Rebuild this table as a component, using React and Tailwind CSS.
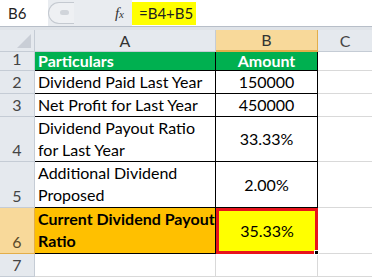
import React from "react";

const F = { fontFamily: "Lato, 'Liberation Sans', sans-serif" };

function RowHead({ n, h, sel }) {
  return (
    <div
      className={`w-[35px] shrink-0 flex items-end justify-center border-r border-b text-[16px] leading-[22px] ${
        sel ? "bg-[#f8d99a] border-[#e3ae4a] text-[#5a4a2a]" : "bg-[#e5e9ee] border-[#c5ccd5] text-[#444]"
      }`}
      style={{ height: h }}
    >
      {n}
    </div>
  );
}

export default function App() {
  return (
    <div className="w-[372px] h-[277px] overflow-hidden bg-white text-black" style={F}>
      {/* formula bar */}
      <div className="h-[27px] flex items-stretch bg-white border-b border-[#b7bec8]">
        <div className="w-[48px] shrink-0 flex items-center pl-[8px] text-[15px] text-[#222]">B6</div>
        <div className="w-[84px] shrink-0 flex items-center bg-[#e9ecf0] relative">
          <div className="absolute left-0 top-[2px] bottom-[2px] w-[26px] rounded-l-full border border-[#c4c9d0] border-r-0 bg-[#eef0f3]" />
          <div className="absolute left-[12px] top-[10px] w-[9px] h-[5px] rounded-full bg-[#d0d4da]" />
          <span className="ml-auto mr-[8px] italic font-serif text-[15px] text-[#333]" style={{ fontFamily: "'Liberation Serif', serif" }}>
            f<span className="text-[11px]">x</span>
          </span>
        </div>
        <div className="flex-1 flex items-center">
          <div className="h-[23px] w-[64px] bg-[#ffff00] flex items-center pl-[7px] text-[15px] text-[#222]">=B4+B5</div>
        </div>
      </div>
      <div className="h-[3px] bg-[#dfe3e8]" />
      {/* column header */}
      <div className="flex h-[22px]">
        <div className="w-[35px] shrink-0 bg-[#e5e9ee] border-r border-b border-[#c5ccd5] relative">
          <div
            className="absolute right-[3px] bottom-[3px] w-0 h-0"
            style={{ borderLeft: "14px solid transparent", borderBottom: "14px solid #c9ced6" }}
          />
        </div>
        <div className="w-[181px] shrink-0 bg-[#e5e9ee] border-r border-b border-[#c5ccd5] flex items-center justify-center text-[16px] text-[#333]">A</div>
        <div className="w-[102px] shrink-0 bg-[#f8d99a] border-r border-b-2 border-[#e3ae4a] flex items-center justify-center text-[16px] text-[#333]">B</div>
        <div className="flex-1 bg-[#e5e9ee] border-b border-[#c5ccd5] flex items-center justify-center text-[16px] text-[#444]">C</div>
      </div>
      {/* row 1 */}
      <div className="flex">
        <RowHead n="1" h={19} />
        <div className="w-[181px] h-[19px] shrink-0 bg-[#00b050] border-r border-b border-black text-white font-bold text-[16px] leading-[18px] pl-[3px]">Particulars</div>
        <div className="w-[102px] h-[19px] shrink-0 bg-[#00b050] border-r border-b border-black text-white font-bold text-[16px] leading-[18px] text-center">Amount</div>
        <div className="flex-1 h-[19px] border-b border-[#d9d9d9]" />
      </div>
      {/* row 2 */}
      <div className="flex">
        <RowHead n="2" h={23} />
        <div className="w-[181px] h-[23px] shrink-0 border-r border-b border-black text-[16px] leading-[22px] pl-[3px] whitespace-nowrap">Dividend Paid Last Year</div>
        <div className="w-[102px] h-[23px] shrink-0 border-r border-b border-black text-[16px] leading-[22px] text-center">150000</div>
        <div className="flex-1 h-[23px] border-b border-[#d9d9d9]" />
      </div>
      {/* row 3 */}
      <div className="flex">
        <RowHead n="3" h={23} />
        <div className="w-[181px] h-[23px] shrink-0 border-r border-b border-black text-[16px] leading-[22px] pl-[3px] whitespace-nowrap">Net Profit for Last Year</div>
        <div className="w-[102px] h-[23px] shrink-0 border-r border-b border-black text-[16px] leading-[22px] text-center">450000</div>
        <div className="flex-1 h-[23px] border-b border-[#d9d9d9]" />
      </div>
      {/* row 4 */}
      <div className="flex">
        <RowHead n="4" h={45} />
        <div className="w-[181px] h-[45px] shrink-0 border-r border-b border-black text-[16px] leading-[22px] pl-[3px]">
          <div>Dividend Payout Ratio</div>
          <div>for Last Year</div>
        </div>
        <div className="w-[102px] h-[45px] shrink-0 border-r border-b border-black text-[16px] flex items-center justify-center">33.33%</div>
        <div className="flex-1 h-[45px] border-b border-[#d9d9d9]" />
      </div>
      {/* row 5 */}
      <div className="flex">
        <RowHead n="5" h={46} />
        <div className="w-[181px] h-[46px] shrink-0 border-r border-b border-black text-[16px] leading-[22px] pl-[3px]">
          <div>Additional Dividend</div>
          <div>Proposed</div>
        </div>
        <div className="w-[102px] h-[46px] shrink-0 border-r border-b border-black text-[16px] flex items-center justify-center">2.00%</div>
        <div className="flex-1 h-[46px] border-b border-[#d9d9d9]" />
      </div>
      {/* row 6 */}
      <div className="flex">
        <RowHead n="6" h={46} sel />
        <div className="w-[181px] h-[46px] shrink-0 bg-[#ffc000] border-r border-b border-black text-[16px] leading-[22px] pl-[3px] font-bold">
          <div className="whitespace-nowrap">Current Dividend Payout</div>
          <div>Ratio</div>
        </div>
        <div className="w-[102px] h-[46px] shrink-0 bg-[#ffff00] border-[3px] border-[#e8141b] text-[16px] flex items-center justify-center relative">
          35.33%
          <div className="absolute right-[-4px] bottom-[-4px] w-[5px] h-[5px] bg-black border border-white" />
        </div>
        <div className="flex-1 h-[46px] border-b border-[#d9d9d9]" />
      </div>
      {/* row 7 */}
      <div className="flex">
        <RowHead n="7" h={23} />
        <div className="w-[181px] h-[23px] shrink-0 border-r border-b border-[#d9d9d9]" />
        <div className="w-[102px] h-[23px] shrink-0 border-r border-b border-[#d9d9d9]" />
        <div className="flex-1 h-[23px] border-b border-[#d9d9d9]" />
      </div>
    </div>
  );
}
